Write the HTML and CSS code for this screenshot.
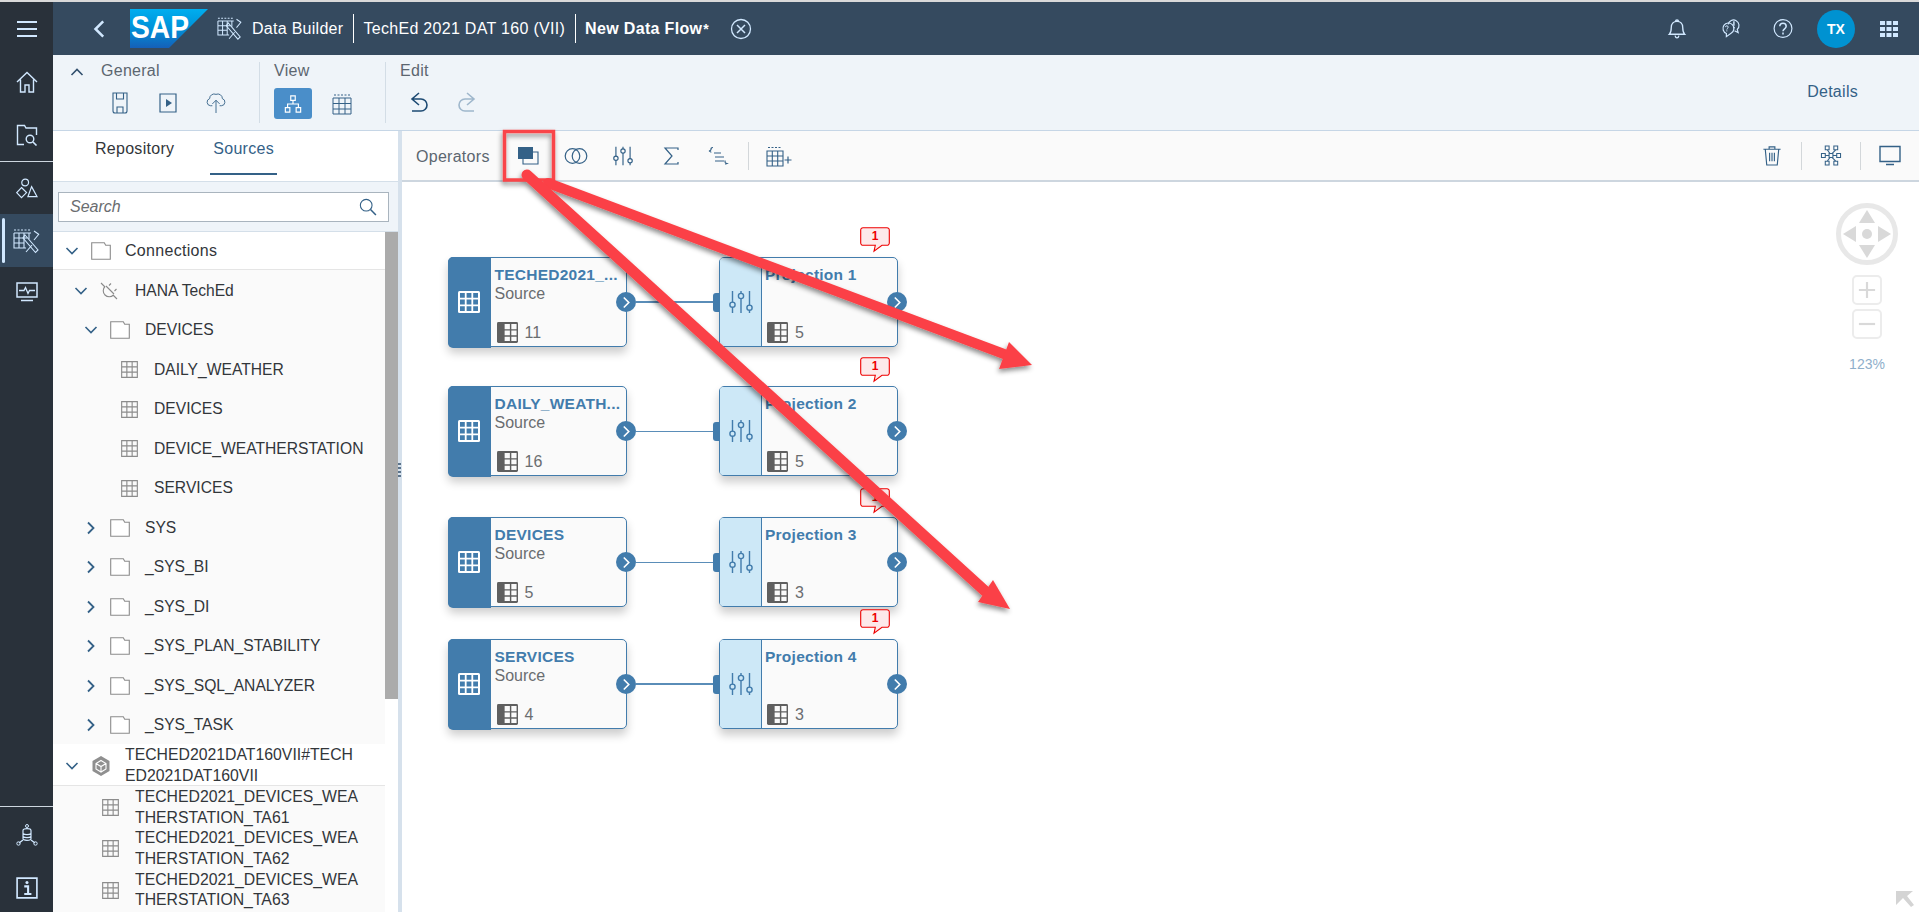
FILE: index.html
```html
<!DOCTYPE html>
<html lang="en">
<head>
<meta charset="utf-8">
<title>Data Builder</title>
<link rel="stylesheet" href="styles.css">
</head>
<body>
<svg class="defs" width="0" height="0" aria-hidden="true">
  <defs>
    <symbol id="i-table" viewBox="0 0 18 18"><path d="M.7.7h16.6v16.6H.7zM6.2.7v16.6M11.8.7v16.6M.7 6.2h16.6M.7 11.8h16.6" fill="none" stroke="currentColor" stroke-width="1.2"/></symbol>
    <symbol id="i-folder" viewBox="0 0 20 18"><path d="M.7 17.3V.7h12.6l1.4 2.6h4.6v14z" fill="#fff" stroke="currentColor" stroke-width="1.1"/></symbol>
    <symbol id="i-sliders" viewBox="0 0 26 24"><g fill="none" stroke="currentColor" stroke-width="1.4"><path d="M4.5 1v11.5M4.5 17v6M13 1v2.5M13 8.5V23M21.5 1v14.5M21.5 20v3"/><circle cx="4.5" cy="14.7" r="2.6"/><circle cx="13" cy="6" r="2.6"/><circle cx="21.5" cy="17.7" r="2.6"/></g></symbol>
    <symbol id="i-builder" viewBox="0 0 28 26"><g fill="none" stroke="currentColor" stroke-width="1.1"><path d="M1 2h16" stroke-dasharray="2 1.500"/><path d="M1 5v15h12M6 5v15M11 5v15M16 5v6M1 5h17M1 10h13M1 15h10"/><path d="M12 7l13 15-2.500 2.500L10 10zM26 6l-5 6M13 24l6-7M21 3l5 3.500"/></g></symbol>
    <symbol id="i-tablesolid" viewBox="0 0 22 22"><rect width="22" height="22" rx="1.5" fill="#5f5f5f"/><path d="M8 2h5.5v5.5H8zM15 2h5.5v5.5H15zM8 9h5.5v5H8zM15 9h5.5v5H15zM8 15.500h5.500V20H8zM15 15.500h5.500V20H15z" fill="#fafafa"/></symbol>
    <symbol id="i-tablewhite" viewBox="0 0 22 22"><rect width="22" height="22" rx="1.5" fill="#fff"/><path d="M2 2h4.800v4.800H2zM8.600 2h4.800v4.800H8.600zM15.200 2H20v4.800h-4.800zM2 8.600h4.800v4.800H2zM8.600 8.600h4.800v4.800H8.600zM15.200 8.600H20v4.800h-4.800zM2 15.200h4.800V20H2zM8.600 15.200h4.800V20H8.600zM15.200 15.200H20V20h-4.800z" fill="#427cac"/></symbol>
    <symbol id="i-chev-r" viewBox="0 0 10 14"><path d="M2 1.500L7.500 7 2 12.500" fill="none" stroke="currentColor" stroke-width="1.800"/></symbol>
    <symbol id="i-chev-d" viewBox="0 0 14 10"><path d="M1.500 2L7 7.500 12.500 2" fill="none" stroke="currentColor" stroke-width="1.600"/></symbol>
    <symbol id="i-note" viewBox="0 0 30 26"><path d="M3 .7h24a2.300 2.300 0 0 1 2.300 2.300v13a2.300 2.300 0 0 1-2.300 2.300h-5l-8 6 1.300-6H3A2.300 2.300 0 0 1 .7 16V3A2.300 2.300 0 0 1 3 .7z" fill="#fde9ea" stroke="#ee0000" stroke-width="1.100"/></symbol>
  </defs>
</svg>

<div class="app">
  <div class="top-strip"></div>
  <div class="shell">
    <nav class="nav">
      <div class="nav-item nav-burger"><svg class="nav-ic" viewBox="0 0 22 18"><path d="M1 2h20M1 9h20M1 16h20" fill="none" stroke="currentColor" stroke-width="1.800"/></svg></div>
      <div class="nav-item nav-home"><svg class="nav-ic" viewBox="0 0 22 22"><path d="M1 11L11 1.500 21 11M4.500 8.500V21h4.500v-7h4v7h4.500V8.500" fill="none" stroke="currentColor" stroke-width="1.400"/></svg></div>
      <div class="nav-item nav-find"><svg class="nav-ic" viewBox="0 0 22 22"><path d="M8 20.500H1.500V1.500h7l1.500 2.500h10.500v7M11 12.500" fill="none" stroke="currentColor" stroke-width="1.400"/><circle cx="14" cy="15" r="3.800" fill="none" stroke="currentColor" stroke-width="1.400"/><path d="M17 18l3.500 3.500" stroke="currentColor" stroke-width="1.600"/></svg></div>
      <div class="nav-line"></div>
      <div class="nav-item nav-shapes"><svg class="nav-ic" viewBox="0 0 24 22"><circle cx="10" cy="5" r="3.700" fill="none" stroke="currentColor" stroke-width="1.300"/><path d="M6 10.500l5.500 5.500-5.500 5.500L.8 16zM17 9.500l6 11H13z" fill="none" stroke="currentColor" stroke-width="1.300"/></svg></div>
      <div class="nav-item nav-active"><svg class="nav-ic nav-ic-lg"><use href="#i-builder"/></svg></div>
      <div class="nav-item nav-monitor"><svg class="nav-ic" viewBox="0 0 22 20"><path d="M1 1h20v14H1z" fill="none" stroke="currentColor" stroke-width="1.500"/><path d="M3 8.500h5l1.500-3 2.500 6 1.500-3h5.500M5 18.500h12" fill="none" stroke="currentColor" stroke-width="1.300"/></svg></div>
      <div class="nav-spacer"></div>
      <div class="nav-line"></div>
      <div class="nav-item nav-conn"><svg class="nav-ic" viewBox="0 0 22 22"><circle cx="11" cy="2" r="1.500" fill="none" stroke="currentColor"/><path d="M7 6.500c0-2.500 8-2.500 8 0v8c0 2.500-8 2.500-8 0zM7 9.500c1.500 1.500 6.500 1.500 8 0M7 12.500c1.500 1.500 6.500 1.500 8 0" fill="none" stroke="currentColor" stroke-width="1.200"/><path d="M3 19l4-3M19 19l-4-3" stroke="currentColor" stroke-width="1.300"/><circle cx="2.500" cy="19.500" r="1.700" fill="none" stroke="currentColor"/><circle cx="19.500" cy="19.500" r="1.700" fill="none" stroke="currentColor"/></svg></div>
      <div class="nav-item nav-info"><svg class="nav-ic" viewBox="0 0 20 20"><path d="M1 1h18v18H1z" fill="none" stroke="currentColor" stroke-width="1.500"/><circle cx="10" cy="5" r="1.400" fill="currentColor"/><path d="M7.500 8.500H11v7M7.500 15.500h6.500" fill="none" stroke="currentColor" stroke-width="1.900"/></svg></div>
    </nav>

    <div class="main">
      <header class="header">
        <svg class="hd-back"><use href="#i-chev-r"/></svg>
        <svg class="logo" viewBox="0 0 78 39">
          <defs><linearGradient id="sapg" x1="0" y1="0" x2="0" y2="1"><stop offset="0" stop-color="#00aeef"/><stop offset=".5" stop-color="#0091d8"/><stop offset="1" stop-color="#1560b8"/></linearGradient></defs>
          <path d="M0 0h78L39 39H0z" fill="url(#sapg)"/>
          <text class="logo-text" x="1" y="29" textLength="58" lengthAdjust="spacingAndGlyphs">SAP</text>
        </svg>
        <svg class="hd-builder"><use href="#i-builder"/></svg>
        <span class="hd-text">Data Builder</span>
        <span class="hd-sep"></span>
        <span class="hd-text hd-title">TechEd 2021 DAT 160 (VII)</span>
        <span class="hd-sep"></span>
        <span class="hd-text hd-bold">New Data Flow</span><span class="hd-star">*</span>
        <svg class="hd-close" viewBox="0 0 22 22"><circle cx="11" cy="11" r="9.500" fill="none" stroke="currentColor" stroke-width="1.300"/><path d="M7 7l8 8M15 7l-8 8" stroke="currentColor" stroke-width="1.500"/></svg>
        <div class="hd-right">
          <svg class="hd-ic" viewBox="0 0 20 22"><path d="M2 17c2-2 2-3 2-7 0-4 2.500-6.500 6-6.500s6 2.500 6 6.500c0 4 0 5 2 7zM8.500 3.500c0-2 3-2 3 0M8 18.500c.5 3 3.500 3 4 0" fill="none" stroke="currentColor" stroke-width="1.400"/></svg>
          <svg class="hd-ic" viewBox="0 0 22 22"><path d="M7 20v-3.500a6 6 0 1 1 5.500-.5z" fill="none" stroke="currentColor" stroke-width="1.300"/><path d="M9 6.500a6 6 0 1 1 10 5.500l1 3.500-4-2" fill="none" stroke="currentColor" stroke-width="1.300"/><path d="M15.300 3v5M15.300 9.300v1.500" stroke="currentColor" stroke-width="1.600"/><path d="M6 9.500c0-2 3-2 3 0 0 1.300-1.500 1.300-1.500 2.700M7.500 13v1.200" fill="none" stroke="currentColor" stroke-width="1.100"/></svg>
          <svg class="hd-ic" viewBox="0 0 22 22"><circle cx="11" cy="11" r="9.800" fill="none" stroke="currentColor" stroke-width="1.300"/><path d="M7.500 8.500c0-4.500 7-4.500 7 0 0 2.800-3.500 2.800-3.500 5.500M11 15.500v2" fill="none" stroke="currentColor" stroke-width="1.700"/></svg>
          <span class="avatar">TX</span>
          <svg class="hd-grid" viewBox="0 0 18 16"><path d="M0 0h5v4H0zM6.500 0h5v4h-5zM13 0h5v4h-5zM0 6h5v4H0zM6.500 6h5v4h-5zM13 6h5v4h-5zM0 12h5v4H0zM6.500 12h5v4h-5zM13 12h5v4h-5z" fill="currentColor"/></svg>
        </div>
      </header>

      <section class="toolbar">
        <div class="tb-group tb-general">
          <svg class="tb-collapse"><use href="#i-chev-d"/></svg>
          <div class="tb-stack">
            <span class="tb-label">General</span>
            <div class="tb-icons tb-icons-general">
              <svg class="tb-ic" viewBox="0 0 20 22"><path d="M3 1h14v18a2 2 0 0 1-2 2H5a2 2 0 0 1-2-2zM6.500 1v6h7V1M7 21v-6h6v6" fill="none" stroke="currentColor" stroke-width="1.100"/></svg>
              <svg class="tb-ic" viewBox="0 0 20 22"><path d="M2 2h16v18H2z" fill="none" stroke="currentColor" stroke-width="1.200"/><path d="M8 7l6 4-6 4z" fill="currentColor"/></svg>
              <svg class="tb-ic" viewBox="0 0 22 24"><path d="M7 15H5a4 4 0 0 1-1-7.800A5 5 0 0 1 11 2.500a5 5 0 0 1 7 4.700A4 4 0 0 1 17 15h-2M11 23V9M7 13l4-4 4 4" fill="none" stroke="currentColor" stroke-width="1"/></svg>
            </div>
          </div>
        </div>
        <div class="tb-group tb-view">
          <span class="tb-label">View</span>
          <div class="tb-icons tb-icons-view">
            <span class="tb-active"><svg class="tb-ic" viewBox="0 0 20 20"><path d="M7.500 1h5v5h-5zM1.500 14h5v5h-5zM13.500 14h5v5h-5zM10 6v4M4 14v-4h12v4" fill="none" stroke="currentColor" stroke-width="1.300"/></svg></span>
            <svg class="tb-ic tb-ic-grid" viewBox="0 0 20 22"><path d="M1 5h18v16H1zM7 5v16M13 5v16M1 10.500h18M1 16h18" fill="none" stroke="currentColor" stroke-width="1"/><path d="M2 2h16" fill="none" stroke="currentColor" stroke-dasharray="2 1.500"/></svg>
          </div>
        </div>
        <div class="tb-group tb-edit">
          <span class="tb-label">Edit</span>
          <div class="tb-icons tb-icons-edit">
            <svg class="tb-ic" viewBox="0 0 20 22"><path d="M10 1L3 7l7 6M3 7h9a6 6 0 0 1 0 12H3" fill="none" stroke="#1d4a73" stroke-width="1.600"/></svg>
            <svg class="tb-ic tb-ic-muted" viewBox="0 0 20 22"><path d="M10 1l7 6-7 6M17 7H8a6 6 0 0 0 0 12h9" fill="none" stroke="currentColor" stroke-width="1.600"/></svg>
          </div>
        </div>
        <span class="tb-details">Details</span>
      </section>

      <div class="work">
        <aside class="panel">
          <div class="tabs">
            <span class="tab">Repository</span>
            <span class="tab tab-active">Sources</span>
          </div>
          <div class="search-wrap">
            <div class="search">
              <span class="search-text">Search</span>
              <svg class="search-ic" viewBox="0 0 20 20"><circle cx="8" cy="8" r="6.500" fill="none" stroke="currentColor" stroke-width="1.200"/><path d="M12.800 12.800l6 6" stroke="currentColor" stroke-width="1.700"/></svg>
            </div>
          </div>
          <div class="tree-wrap">
            <div class="tree">
              <div class="row row-head lv0"><svg class="chev"><use href="#i-chev-d"/></svg><svg class="ic-folder"><use href="#i-folder"/></svg><span>Connections</span></div>
              <div class="row lv1"><svg class="chev"><use href="#i-chev-d"/></svg><svg class="ic-plug" viewBox="0 0 18 18"><g fill="none" stroke="#8a8a8a" stroke-width="1.100"><path d="M1 1l4 4M13 13l4 4M6 4l8 8"/><path d="M5 4.500a5 5 0 0 0 8.500 8.500M9 3.500l2-2M14.500 9l2-2"/></g></svg><span>HANA TechEd</span></div>
              <div class="row lv2"><svg class="chev"><use href="#i-chev-d"/></svg><svg class="ic-folder"><use href="#i-folder"/></svg><span>DEVICES</span></div>
              <div class="row lv3"><svg class="ic-table"><use href="#i-table"/></svg><span>DAILY_WEATHER</span></div>
              <div class="row lv3"><svg class="ic-table"><use href="#i-table"/></svg><span>DEVICES</span></div>
              <div class="row lv3"><svg class="ic-table"><use href="#i-table"/></svg><span>DEVICE_WEATHERSTATION</span></div>
              <div class="row lv3"><svg class="ic-table"><use href="#i-table"/></svg><span>SERVICES</span></div>
              <div class="row lv2"><svg class="chev chev-r"><use href="#i-chev-r"/></svg><svg class="ic-folder"><use href="#i-folder"/></svg><span>SYS</span></div>
              <div class="row lv2"><svg class="chev chev-r"><use href="#i-chev-r"/></svg><svg class="ic-folder"><use href="#i-folder"/></svg><span>_SYS_BI</span></div>
              <div class="row lv2"><svg class="chev chev-r"><use href="#i-chev-r"/></svg><svg class="ic-folder"><use href="#i-folder"/></svg><span>_SYS_DI</span></div>
              <div class="row lv2"><svg class="chev chev-r"><use href="#i-chev-r"/></svg><svg class="ic-folder"><use href="#i-folder"/></svg><span>_SYS_PLAN_STABILITY</span></div>
              <div class="row lv2"><svg class="chev chev-r"><use href="#i-chev-r"/></svg><svg class="ic-folder"><use href="#i-folder"/></svg><span>_SYS_SQL_ANALYZER</span></div>
              <div class="row lv2"><svg class="chev chev-r"><use href="#i-chev-r"/></svg><svg class="ic-folder"><use href="#i-folder"/></svg><span>_SYS_TASK</span></div>
              <div class="row row-group lv0"><svg class="chev"><use href="#i-chev-d"/></svg><svg class="ic-space" viewBox="0 0 20 22"><path d="M10 1l8.500 5v10L10 21l-8.500-5V6z" fill="#8f8f8f"/><path d="M10 5.500l5 3v5.500l-5 3-5-3V8.500zM5 8.500l5 3 5-3M10 11.500V17" fill="none" stroke="#fff" stroke-width="1.100"/></svg><span>TECHED2021DAT160VII#TECH<br>ED2021DAT160VII</span></div>
              <div class="row row-item"><svg class="ic-table"><use href="#i-table"/></svg><span>TECHED2021_DEVICES_WEA<br>THERSTATION_TA61</span></div>
              <div class="row row-item"><svg class="ic-table"><use href="#i-table"/></svg><span>TECHED2021_DEVICES_WEA<br>THERSTATION_TA62</span></div>
              <div class="row row-item"><svg class="ic-table"><use href="#i-table"/></svg><span>TECHED2021_DEVICES_WEA<br>THERSTATION_TA63</span></div>
            </div>
            <div class="scroll"><div class="scroll-thumb"></div></div>
          </div>
        </aside>
        <div class="split"><span class="split-dots"></span></div>

        <div class="editor">
          <div class="ops">
            <span class="ops-label">Operators</span>
            <svg class="op op-first" viewBox="0 0 22 20"><path d="M6 6h15v12H6z" fill="none" stroke="currentColor" stroke-width="1.100"/><path d="M1 1h15v12H1z" fill="currentColor"/></svg>
            <svg class="op" viewBox="0 0 24 18"><circle cx="8.500" cy="9" r="7.300" fill="none" stroke="currentColor" stroke-width="1.200"/><circle cx="15.500" cy="9" r="7.300" fill="none" stroke="currentColor" stroke-width="1.200"/></svg>
            <svg class="op"><use href="#i-sliders"/></svg>
            <svg class="op" viewBox="0 0 20 20"><path d="M17 4V2H4l7 8-7 8h13v-2" fill="none" stroke="currentColor" stroke-width="1.200"/></svg>
            <svg class="op" viewBox="0 0 22 20"><path d="M6 1.500C4 1.500 4 2.500 4 3.500S2 5 2 5s2 .5 2 1.500M7 7h7M8 11h9M8 15h9M18 14.500c0 1.500 0 2 .5 2.500 0 0 1.500.5 1.500.5s-1.500.5-1.500 1" fill="none" stroke="currentColor" stroke-width="1.200"/></svg>
            <span class="ops-sep"></span>
            <svg class="op op-add" viewBox="0 0 26 22"><path d="M1 6h16v15H1zM6.300 6v15M11.700 6v15M1 11h16M1 16h16" fill="none" stroke="currentColor" stroke-width="1.100"/><path d="M2 2.500h14" fill="none" stroke="currentColor" stroke-dasharray="2 1.500"/><path d="M18.500 15h7M22 11.500v7" stroke="currentColor" stroke-width="1.200"/></svg>
            <div class="ops-right">
              <svg class="op-r" viewBox="0 0 20 22"><path d="M1 4.500h18M7 4V2h6v2M3 5l1.500 16h11L17 5M7.500 8v9M10 8v9M12.500 8v9" fill="none" stroke="currentColor" stroke-width="1.200"/></svg>
              <span class="ops-sep"></span>
              <svg class="op-r" viewBox="0 0 22 22"><path d="M5 1h4v4H5zM14 1h4v4h-4zM1 9h4v4H1zM9 9h4v4H9zM17 9h4v4h-4zM5 17h4v4H5zM14 17h4v4h-4zM5 11h4M13 11h4M7 5l3 4M16 5l-4 4M7 17l3-4M16 17l-4-4" fill="none" stroke="currentColor" stroke-width="1.100"/></svg>
              <span class="ops-sep"></span>
              <svg class="op-r" viewBox="0 0 22 20"><path d="M1 1h20v15H1zM7 19h8" fill="none" stroke="currentColor" stroke-width="1.400"/></svg>
            </div>
          </div>

          <div class="canvas">
            <div class="link link-1"></div>
            <div class="link link-2"></div>
            <div class="link link-3"></div>
            <div class="link link-4"></div>

            <article class="node src r1">
              <div class="band"><svg class="band-ic"><use href="#i-tablewhite"/></svg></div>
              <div class="nbody"><b>TECHED2021_...</b><small>Source</small><p class="ncount"><svg class="count-ic"><use href="#i-tablesolid"/></svg>11</p></div>
              <span class="port"><svg class="port-ic"><use href="#i-chev-r"/></svg></span>
            </article>
            <article class="node src r2">
              <div class="band"><svg class="band-ic"><use href="#i-tablewhite"/></svg></div>
              <div class="nbody"><b>DAILY_WEATH...</b><small>Source</small><p class="ncount"><svg class="count-ic"><use href="#i-tablesolid"/></svg>16</p></div>
              <span class="port"><svg class="port-ic"><use href="#i-chev-r"/></svg></span>
            </article>
            <article class="node src r3">
              <div class="band"><svg class="band-ic"><use href="#i-tablewhite"/></svg></div>
              <div class="nbody"><b>DEVICES</b><small>Source</small><p class="ncount"><svg class="count-ic"><use href="#i-tablesolid"/></svg>5</p></div>
              <span class="port"><svg class="port-ic"><use href="#i-chev-r"/></svg></span>
            </article>
            <article class="node src r4">
              <div class="band"><svg class="band-ic"><use href="#i-tablewhite"/></svg></div>
              <div class="nbody"><b>SERVICES</b><small>Source</small><p class="ncount"><svg class="count-ic"><use href="#i-tablesolid"/></svg>4</p></div>
              <span class="port"><svg class="port-ic"><use href="#i-chev-r"/></svg></span>
            </article>

            <article class="node prj r1">
              <span class="note"><svg class="note-ic"><use href="#i-note"/></svg><i>1</i></span>
              <span class="inport"></span>
              <div class="band"><svg class="band-ic2"><use href="#i-sliders"/></svg></div>
              <div class="nbody"><b>Projection 1</b><small>&nbsp;</small><p class="ncount"><svg class="count-ic"><use href="#i-tablesolid"/></svg>5</p></div>
              <span class="port"><svg class="port-ic"><use href="#i-chev-r"/></svg></span>
            </article>
            <article class="node prj r2">
              <span class="note"><svg class="note-ic"><use href="#i-note"/></svg><i>1</i></span>
              <span class="inport"></span>
              <div class="band"><svg class="band-ic2"><use href="#i-sliders"/></svg></div>
              <div class="nbody"><b>Projection 2</b><small>&nbsp;</small><p class="ncount"><svg class="count-ic"><use href="#i-tablesolid"/></svg>5</p></div>
              <span class="port"><svg class="port-ic"><use href="#i-chev-r"/></svg></span>
            </article>
            <article class="node prj r3">
              <span class="note"><svg class="note-ic"><use href="#i-note"/></svg><i>1</i></span>
              <span class="inport"></span>
              <div class="band"><svg class="band-ic2"><use href="#i-sliders"/></svg></div>
              <div class="nbody"><b>Projection 3</b><small>&nbsp;</small><p class="ncount"><svg class="count-ic"><use href="#i-tablesolid"/></svg>3</p></div>
              <span class="port"><svg class="port-ic"><use href="#i-chev-r"/></svg></span>
            </article>
            <article class="node prj r4">
              <span class="note"><svg class="note-ic"><use href="#i-note"/></svg><i>1</i></span>
              <span class="inport"></span>
              <div class="band"><svg class="band-ic2"><use href="#i-sliders"/></svg></div>
              <div class="nbody"><b>Projection 4</b><small>&nbsp;</small><p class="ncount"><svg class="count-ic"><use href="#i-tablesolid"/></svg>3</p></div>
              <span class="port"><svg class="port-ic"><use href="#i-chev-r"/></svg></span>
            </article>

            <div class="navi">
              <svg class="compass" viewBox="0 0 64 64"><circle cx="32" cy="32" r="28.500" fill="#fff" stroke="#e8e8e8" stroke-width="5"/><path d="M32 8l8 13H24zM32 56l-8-13h16zM8 32l13-8v16zM56 32l-13 8V24z" fill="#d9d9d9"/><circle cx="32" cy="32" r="5" fill="#d9d9d9"/></svg>
              <span class="zoom-btn"><svg viewBox="0 0 20 20" class="zoom-ic"><path d="M10 1v18M1 10h18" stroke="#d9d9d9" stroke-width="2.400"/></svg></span>
              <span class="zoom-btn"><svg viewBox="0 0 20 20" class="zoom-ic"><path d="M1 10h18" stroke="#d9d9d9" stroke-width="2.400"/></svg></span>
              <span class="zoom-pct">123%</span>
            </div>
            <svg class="corner" viewBox="0 0 18 16"><path d="M0 0h17l-6 5 7 9-3 2-8-9-7 7z" fill="#d4d4d4"/></svg>
          </div>
        </div>
      </div>
    </div>
  </div>

  <svg class="overlay" viewBox="0 0 1919 912">
    <defs>
      <filter id="shd" x="-10%" y="-10%" width="120%" height="120%"><feDropShadow dx="-1" dy="3" stdDeviation="2.500" flood-color="#000" flood-opacity=".45"/></filter>
    </defs>
    <g filter="url(#shd)">
      <rect x="504.500" y="131.500" width="49" height="48.500" fill="none" stroke="#f94448" stroke-width="3.500"/>
      <path d="M548 183L1004 354" stroke="#fb4146" stroke-width="10" stroke-linecap="round"/>
      <path d="M1009 342L1032 365 999 369z" fill="#fb4146"/>
      <path d="M527 175L985 591" stroke="#fb4146" stroke-width="11" stroke-linecap="round"/>
      <path d="M993 580L1010 609 978 602z" fill="#fb4146"/>
    </g>
  </svg>
</div>
</body>
</html>
```
FILE: styles.css
```css
* { box-sizing: border-box; }
html, body { margin: 0; padding: 0; height: 100%; overflow: hidden; background: #fff; }
body { font-family: "Liberation Sans", Arial, sans-serif; font-size: 16px; color: #32363a; }
svg { display: block; flex: none; }
.defs { position: absolute; }

.app { position: relative; width: 1919px; height: 912px; display: flex; flex-direction: column; overflow: hidden; }
.top-strip { height: 2px; background: #d9d9d9; flex: none; }
.shell { flex: 1; display: flex; min-height: 0; }

/* left navigation */
.nav { width: 53px; flex: none; background: #29313a; display: flex; flex-direction: column; color: #d1e8ff; }
.nav-item { display: flex; align-items: center; justify-content: center; flex: none; }
.nav-ic { width: 22px; height: 22px; }
.nav-ic-lg { width: 28px; height: 26px; }
.nav-burger { height: 53px; }
.nav-home { height: 54px; }
.nav-find { height: 52px; }
.nav-line { height: 1px; background: #cdd6df; flex: none; }
.nav-shapes { height: 52px; }
.nav-active { height: 53px; background: #354a5f; position: relative; }
.nav-active::before { content: ""; position: absolute; left: 2px; top: 4px; bottom: 4px; width: 3px; border-radius: 2px; background: #d1e8ff; }
.nav-monitor { height: 50px; }
.nav-spacer { flex: 1; }
.nav-conn { height: 56px; }
.nav-info { height: 50px; margin-bottom: -1px; }

/* main column */
.main { flex: 1; min-width: 0; display: flex; flex-direction: column; }
.header { height: 53px; flex: none; background: #354a5f; color: #fff; display: flex; align-items: center; padding-left: 39px; }
.hd-back { width: 14px; height: 20px; transform: scaleX(-1); color: #d1e8ff; margin-right: 24px; }
.logo { width: 78px; height: 39px; margin-right: 9px; }
.logo-text { font-family: "Liberation Sans", sans-serif; font-weight: 700; font-size: 32px; fill: #fff; }
.hd-builder { width: 26px; height: 25px; color: #d1e8ff; margin-right: 9px; }
.hd-text { font-size: 16px; letter-spacing: .28px; white-space: nowrap; }
.hd-title { letter-spacing: .3px; }
.hd-bold { font-weight: 700; letter-spacing: .33px; }
.hd-star { font-size: 14px; font-weight: 700; margin-left: 1px; }
.hd-sep { width: 1px; height: 29px; background: #fff; margin: 0 9.500px; }
.hd-close { width: 22px; height: 22px; color: #d1e8ff; margin-left: 21px; }
.hd-right { margin-left: auto; display: flex; align-items: center; color: #d1e8ff; padding-right: 21px; }
.hd-ic { width: 20px; height: 21px; margin-right: 33px; }
.avatar { width: 38px; height: 38px; border-radius: 50%; background: #0092d1; color: #fff; font-weight: 700; font-size: 14px; display: flex; align-items: center; justify-content: center; margin-left: -9px; margin-right: 25px; }
.hd-grid { width: 18px; height: 16px; }

.toolbar { height: 76px; flex: none; background: #eff4f9; border-bottom: 1px solid #c6d6e6; display: flex; align-items: stretch; padding-top: 7px; padding-bottom: 7px; }
.tb-group { border-right: 1px solid #d3dde6; display: flex; }
.tb-general { width: 207px; padding-left: 17px; }
.tb-collapse { width: 14px; height: 10px; transform: scaleY(-1); color: #32506e; margin: 5px 0 0 0; }
.tb-stack { display: flex; flex-direction: column; margin-left: 17px; }
.tb-view, .tb-edit { flex-direction: column; }
.tb-view { width: 126px; padding-left: 14px; }
.tb-edit { border-right: 0; padding-left: 14px; }
.tb-label { font-size: 16px; letter-spacing: .28px; line-height: 18px; color: #5c6670; white-space: nowrap; }
.tb-icons { display: flex; align-items: center; height: 40px; margin-top: 4px; }
.tb-ic { width: 20px; height: 22px; color: #346187; }
.tb-icons-general { gap: 28px; padding-left: 9px; margin-top: 3px; }
.tb-icons-view { gap: 20px; }
.tb-active { width: 38px; height: 31px; background: #4a8ec9; color: #fff; border-radius: 3px; display: flex; align-items: center; justify-content: center; }
.tb-active .tb-ic { color: #fff; width: 18px; height: 18px; }
.tb-ic-grid { color: #346187; }
.tb-icons-edit { gap: 28px; padding-left: 9px; margin-top: 3px; }
.tb-ic-muted { color: #9fb7cc; }
.tb-details { margin-left: auto; margin-right: 61px; margin-top: -2px; align-self: center; font-size: 16px; letter-spacing: .28px; color: #346187; }

.work { flex: 1; min-height: 0; display: flex; }
.panel { width: 345px; flex: none; display: flex; flex-direction: column; background: #fff; }
.tabs { height: 50px; flex: none; display: flex; padding-left: 42px; gap: 39px; background: #fff; }
.tab { height: 44px; line-height: 36px; font-size: 16px; letter-spacing: .28px; color: #32363a; }
.tab-active { color: #346187; border-bottom: 2px solid #346187; padding: 0 3px; margin-left: -3px; }
.search-wrap { height: 51px; flex: none; background: #eff4f9; border-top: 1px solid #d4dfe9; border-bottom: 1px solid #d4dfe9; padding: 10px 9px 0 5px; }
.search { height: 30px; background: #fff; border: 1px solid #a9b4be; display: flex; align-items: center; justify-content: space-between; padding: 0 11px; }
.search-text { font-style: italic; font-size: 16px; color: #6a6d70; }
.search-ic { width: 18px; height: 18px; color: #346187; }
.tree-wrap { flex: 1; min-height: 0; display: flex; }
.tree { flex: 1; min-width: 0; background: #fafafa; overflow: hidden; }
.row { height: 39.500px; padding-top: 2px; display: flex; align-items: center; font-size: 15.650px; color: #32363a; white-space: nowrap; }
.row-head { height: 38px; padding-top: 0; background: #fff; border-bottom: 1px solid #e5e5e5; font-size: 16px; letter-spacing: .3px; }
.row-group { height: 42px; background: #fff; border-bottom: 1px solid #e5e5e5; line-height: 20.500px; font-size: 15.800px; }
.row-item { height: 41.300px; line-height: 20.500px; padding-left: 49px; font-size: 15.800px; }
.chev { width: 14px; height: 10px; color: #346187; margin-right: 12px; }
.chev-r { width: 10px; height: 14px; margin-left: 2px; margin-right: 14px; }
.lv0 { padding-left: 12px; }
.lv1 { padding-left: 21px; }
.lv2 { padding-left: 31px; }
.lv3 { padding-left: 68px; }
.ic-folder { width: 20px; height: 18px; color: #8c8c8c; margin-right: 14px; }
.lv2 .ic-folder { margin-right: 15px; }
.ic-plug { width: 18px; height: 18px; margin-right: 17px; }
.ic-table { width: 17px; height: 17px; color: #8c8c8c; margin-right: 16px; }
.ic-space { width: 20px; height: 22px; margin-right: 14px; }
.scroll { width: 13px; flex: none; background: #fff; }
.scroll-thumb { height: 467px; background: #ababab; }
.split { width: 4px; flex: none; background: #d6e1ec; position: relative; }
.split-dots { position: absolute; left: 0; top: 332px; width: 3px; height: 16px; background: repeating-linear-gradient(#5b738b 0 2px, transparent 2px 4px); }

.editor { flex: 1; min-width: 0; display: flex; flex-direction: column; }
.ops { height: 51px; flex: none; background: #fafafa; border-bottom: 2px solid #cdd6df; display: flex; align-items: center; padding-left: 14px; color: #346187; }
.ops-label { font-size: 16px; letter-spacing: .28px; color: #5c6670; width: 100px; margin-top: 2px; }
.op { width: 24px; height: 20px; margin-right: 23.500px; color: #346187; }
.op-add { width: 26px; height: 22px; margin-left: 17px; }
.ops-sep { width: 1px; height: 28px; background: #d3d7da; flex: none; margin-right: 0; }
.op + .ops-sep { margin-left: -6px; }
.ops-right { margin-left: auto; display: flex; align-items: center; padding-right: 18px; gap: 18px; }
.op-r { width: 22px; height: 21px; color: #346187; }

.canvas { flex: 1; position: relative; background: #fff; overflow: hidden; }
.node { position: absolute; width: 179px; height: 90px; border: 1.500px solid #427cac; border-radius: 5px; background: #fafafa; display: flex; box-shadow: 0 6px 10px rgba(0,0,0,.2); }
.src { left: 46px; }
.prj { left: 317px; }
.r1 { top: 75px; }
.r2 { top: 204px; }
.r3 { top: 335px; }
.r4 { top: 457px; }
.band { width: 43px; flex: none; display: flex; align-items: center; justify-content: center; border-radius: 3px 0 0 3px; }
.src .band { background: #427cac; margin: -1.500px 0 -1.500px -1.500px; border-radius: 5px 0 0 5px; }
.prj .band { background: #cde8f7; width: 42px; border-right: 1.500px solid #427cac; }
.band-ic { width: 22px; height: 22px; }
.band-ic2 { width: 26px; height: 24px; color: #427cac; }
.nbody { flex: 1; min-width: 0; padding: 7px 0 0 4px; display: flex; flex-direction: column; }
.prj .nbody { padding-left: 3px; }
.nbody b { font-size: 15.500px; letter-spacing: .25px; line-height: 19px; color: #427cac; white-space: nowrap; }
.nbody small { font-size: 16px; line-height: 19px; color: #6a6d70; }
.ncount { margin: 19px 0 0 2px; display: flex; align-items: center; font-size: 16px; color: #6a6d70; }
.count-ic { width: 21px; height: 21px; margin-right: 7px; }
.port { position: absolute; right: -10px; top: 34px; width: 20px; height: 20px; border-radius: 50%; background: #427cac; color: #fff; display: flex; align-items: center; justify-content: center; }
.port-ic { width: 9px; height: 13px; }
.inport { position: absolute; left: -7px; top: 35px; width: 6px; height: 19px; border-radius: 3px 0 0 3px; background: #427cac; }
.link { position: absolute; left: 234px; width: 80px; height: 1.500px; background: #5a8db8; }
.link-1 { top: 119px; }
.link-2 { top: 248.500px; }
.link-3 { top: 379.500px; }
.link-4 { top: 501px; }
.note { position: absolute; right: 7px; top: -31px; width: 30px; height: 26px; }
.r2 .note, .r3 .note { top: -30px; }
.note-ic { width: 30px; height: 26px; }
.note i { position: absolute; left: 0; right: 0; top: 0; text-align: center; font: 700 12px/18px "Liberation Sans", sans-serif; color: #e00; }

.navi { position: absolute; left: 1433px; top: 20px; width: 64px; display: flex; flex-direction: column; align-items: center; }
.compass { width: 64px; height: 64px; margin-bottom: 9px; }
.zoom-btn { width: 30px; height: 30px; border: 2px solid #ececec; border-radius: 5px; margin-bottom: 4px; display: flex; align-items: center; justify-content: center; }
.zoom-ic { width: 18px; height: 18px; }
.zoom-pct { margin-top: 12px; font-size: 14px; line-height: 18px; color: #8fafcb; }
.corner { position: absolute; left: 1494px; top: 709px; width: 18px; height: 16px; }

.overlay { position: absolute; left: 0; top: 0; width: 1919px; height: 912px; pointer-events: none; }
```
